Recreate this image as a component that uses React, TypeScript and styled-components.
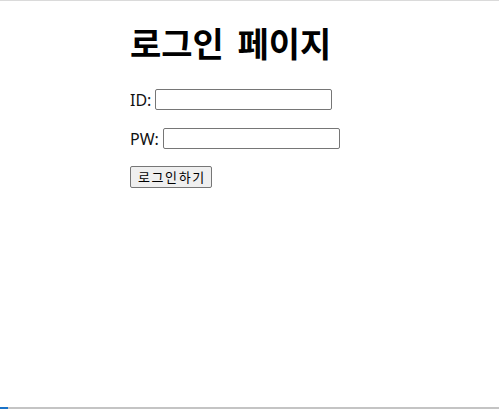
import styled, { createGlobalStyle } from "styled-components";

const GlobalStyle = createGlobalStyle`
    html, body {
        margin: 0;
        padding: 0;
        background: #ffffff;
    }
    body {
        font-family: "Noto Sans", "Noto Sans CJK KR", sans-serif;
        color: #000000;
    }
`;

const Page = styled.div`
    width: 499px;
    height: 409px;
    box-sizing: border-box;
    border-top: 1px solid #dadada;
    display: flex;
    flex-direction: column;
    overflow: hidden;
`;

const Content = styled.div`
    flex: 1;
    padding-left: 130px;
    padding-top: 19px;
    display: flex;
    flex-direction: column;
    align-items: flex-start;
`;

const Title = styled.h1`
    margin: 0 0 22px;
    font-family: "Noto Sans CJK KR", sans-serif;
    font-size: 34px;
    font-weight: 700;
    line-height: 46px;
    letter-spacing: 0;
    word-spacing: 6px;
`;

const Row = styled.div`
    display: flex;
    align-items: center;
    gap: 4px;
    height: 23px;
    margin-bottom: 16px;
    font-size: 16px;
`;

const Label = styled.label`
    font-family: "Noto Sans", "Noto Sans CJK KR", sans-serif;
    font-size: 16px;
    color: #111111;
`;

const Input = styled.input`
    box-sizing: border-box;
    width: 177px;
    height: 21px;
    margin: 0;
    padding: 1px 2px;
    border: 1px solid #767676;
    border-radius: 2px;
    font-size: 13px;
    background: #ffffff;
`;

const Button = styled.button`
    box-sizing: border-box;
    height: 22px;
    padding: 0 5px 0 7px;
    margin: 0;
    border: 1px solid #767676;
    border-radius: 2px;
    background: #efefef;
    font-family: "Noto Sans CJK KR", sans-serif;
    font-size: 13px;
    letter-spacing: 1.6px;
    color: #000000;
    line-height: 20px;
`;

const Footer = styled.div`
    height: 2px;
    background: #c4c4c4;
    display: flex;
`;

const FooterMark = styled.div`
    width: 8px;
    background: #1a73c8;
`;

export default function App() {
    return (
        <>
            <GlobalStyle />
            <Page>
                <Content>
                    <Title>로그인 페이지</Title>
                    <Row>
                        <Label htmlFor="id">ID:</Label>
                        <Input id="id" type="text" />
                    </Row>
                    <Row>
                        <Label htmlFor="pw">PW:</Label>
                        <Input id="pw" type="password" />
                    </Row>
                    <Button type="button">로그인하기</Button>
                </Content>
                <Footer>
                    <FooterMark />
                </Footer>
            </Page>
        </>
    );
}
